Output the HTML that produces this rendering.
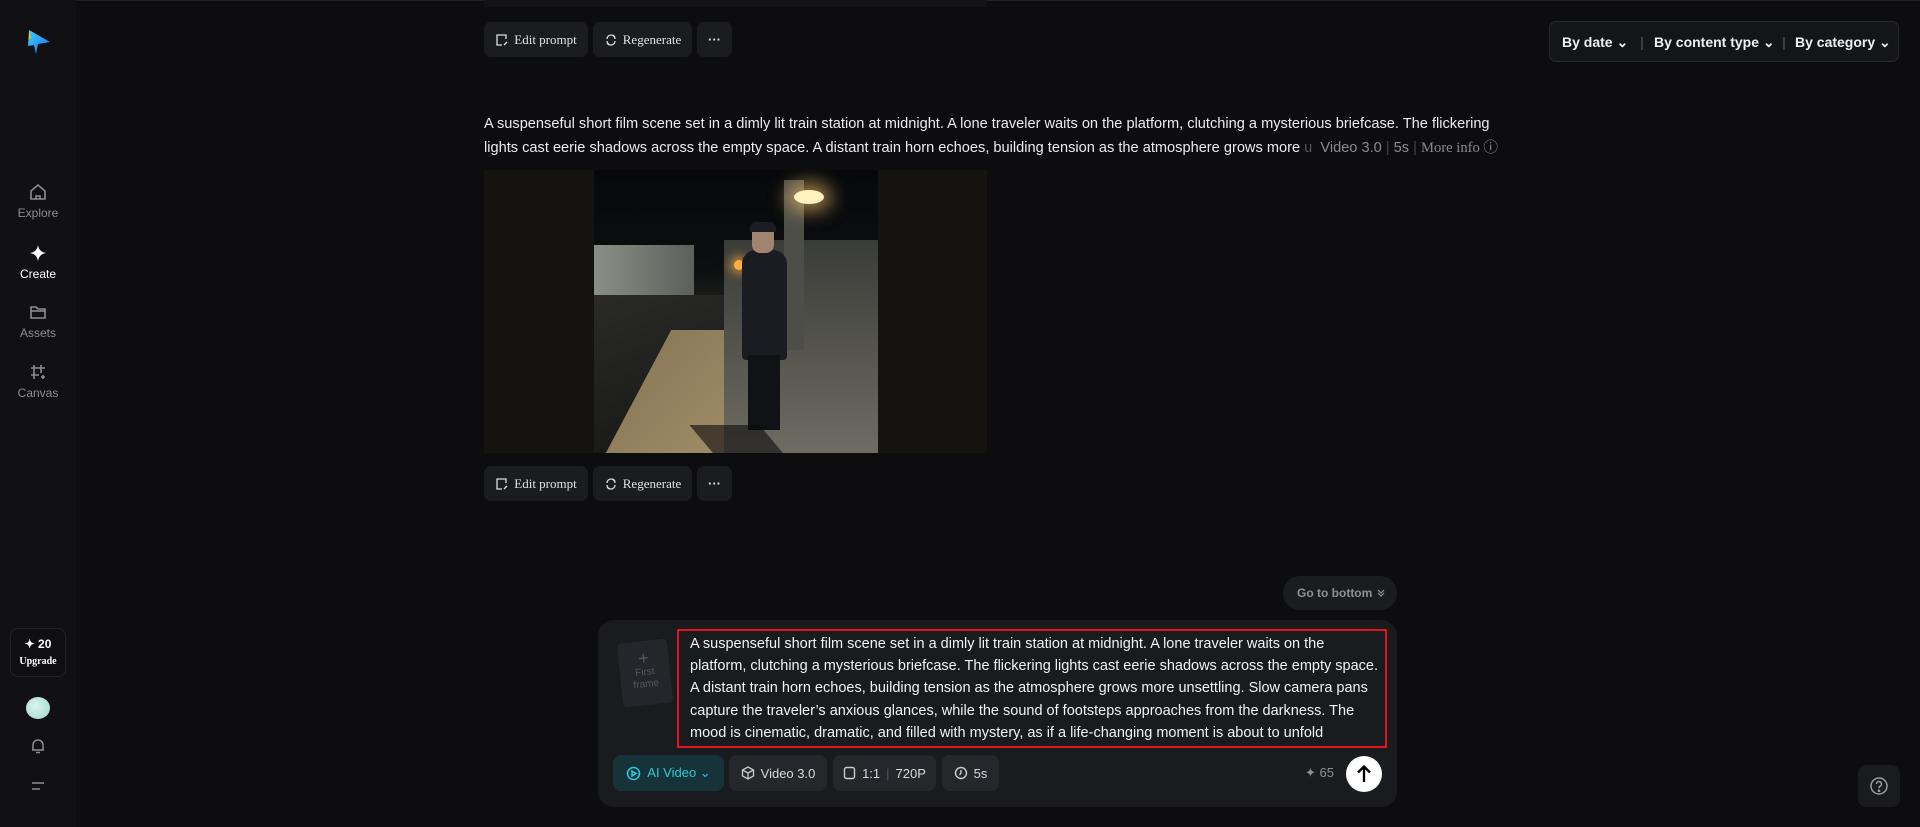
<!DOCTYPE html>
<html><head><meta charset="utf-8"><style>
*{box-sizing:border-box;margin:0;padding:0}
body{width:1920px;height:827px;background:#0d0d0f;font-family:"Liberation Sans",sans-serif;color:#e6e6e8;position:relative;overflow:hidden}
.abs{position:absolute}
.side{left:0;top:0;width:76px;height:827px;background:#111114}
.nav{left:0;width:76px;text-align:center;font-size:12px;color:#8b8d93}
.nav svg{display:block;margin:0 auto 4px}
.btn{position:absolute;height:35px;background:#1b1c20;border-radius:7px;font-family:"Liberation Serif",serif;font-size:13px;color:#e2e2e4;display:flex;align-items:center;justify-content:center;gap:5px}
.chip{position:absolute;top:755px;height:36px;background:#26272c;border-radius:8px;font-size:13px;color:#d8d9dc;display:flex;align-items:center;justify-content:center;gap:6px}
</style></head><body>
<div class="abs side"></div>
<div class="abs" style="left:76px;top:0;width:1844px;height:1px;background:#222"></div>
<svg class="abs" style="left:26px;top:28px" width="26" height="28" viewBox="0 0 26 28"><defs><linearGradient id="g" x1="0" y1="0" x2="1" y2="1"><stop offset="0" stop-color="#3bd0ff"/><stop offset="1" stop-color="#1a6cf0"/></linearGradient></defs><path d="M3 2 L24 14 L12 16 L10 26 L8 17 L2 18 Z" fill="url(#g)"/><path d="M3 2 L5 10 L3 12Z" fill="#f5c000"/></svg>
<div class="abs nav" style="top:182px"><svg width="20" height="20" viewBox="0 0 20 20" fill="none" stroke="#8b8d93" stroke-width="1.6"><path d="M3 9 L10 3 L17 9 V17 H3Z"/><path d="M8 17 v-3 h4 v3"/></svg>Explore</div>
<div class="abs nav" style="top:243px;color:#fff"><svg width="20" height="20" viewBox="0 0 20 20"><path d="M10 2 Q11 9 18 10 Q11 11 10 18 Q9 11 2 10 Q9 9 10 2Z" fill="#fff"/></svg>Create</div>
<div class="abs nav" style="top:302px"><svg width="20" height="20" viewBox="0 0 20 20" fill="none" stroke="#8b8d93" stroke-width="1.6"><path d="M3 5 h5 l2 2 h7 v9 H3Z"/><path d="M3 9 h14"/></svg>Assets</div>
<div class="abs nav" style="top:362px"><svg width="20" height="20" viewBox="0 0 20 20" fill="none" stroke="#8b8d93" stroke-width="1.6"><path d="M6 3 v14 M13 3 v8 M3 6 h14 M3 13 h8"/><path d="M15 13 v4 M13 15 h4"/></svg>Canvas</div>
<div class="abs" style="left:10px;top:628px;width:56px;height:49px;border:1px solid #222328;border-radius:8px;background:#0f0f12;text-align:center">
<div style="font-size:12px;color:#fff;margin-top:8px;font-weight:bold">✦ 20</div>
<div style="font-family:'Liberation Serif',serif;font-size:10px;color:#fff;margin-top:5px;font-weight:bold">Upgrade</div></div>
<div class="abs" style="left:26px;top:697px;width:24px;height:22px;border-radius:50%;background:radial-gradient(circle at 40% 40%,#d8f5ee,#9fd8cc)"></div>
<svg class="abs" style="left:29px;top:737px" width="18" height="18" viewBox="0 0 18 18" fill="none" stroke="#8b8d93" stroke-width="1.5"><path d="M4 13 V8 a5 5 0 0 1 10 0 V13 Z M3 13 h12 M7 15.5 h4"/></svg>
<svg class="abs" style="left:30px;top:779px" width="16" height="14" viewBox="0 0 16 14" stroke="#8b8d93" stroke-width="1.6"><path d="M2 4 h12 M2 10 h8"/></svg>

<div class="abs" style="left:484px;top:0;width:503px;height:7px;background:#141414"></div>
<div class="btn" style="left:484px;top:22px;width:104px"><svg width="14" height="14" viewBox="0 0 14 14" fill="none" stroke="#ddd" stroke-width="1.3"><path d="M11 6 V2 H2 V12 H7"/><path d="M9 12 L12 9"/></svg>Edit prompt</div>
<div class="btn" style="left:593px;top:22px;width:99px"><svg width="14" height="14" viewBox="0 0 14 14" fill="none" stroke="#ddd" stroke-width="1.3"><path d="M3 8 a4 4 0 0 0 8 0 M11 6 a4 4 0 0 0 -8 0 M9 2 l2 2 M5 12 l-2 -2"/></svg>Regenerate</div>
<div class="btn" style="left:697px;top:22px;width:35px;font-family:'Liberation Sans';font-weight:bold">···</div>

<div class="abs" style="left:1549px;top:21px;width:350px;height:41px;background:#141519;border:1px solid #25262b;border-radius:7px;font-size:14px;color:#f0f0f0;font-weight:bold">
<span class="abs" style="left:12px;top:12px">By date ⌄</span>
<span class="abs" style="left:90px;top:12px;color:#444">|</span>
<span class="abs" style="left:104px;top:12px">By content type ⌄</span>
<span class="abs" style="left:232px;top:12px;color:#444">|</span>
<span class="abs" style="left:245px;top:12px">By category ⌄</span></div>

<div class="abs" style="left:484px;top:112px;width:1020px;font-size:14.6px;line-height:24px;color:#ececee">
<div style="white-space:nowrap">A suspenseful short film scene set in a dimly lit train station at midnight. A lone traveler waits on the platform, clutching a mysterious briefcase. The flickering</div>
<div style="white-space:nowrap">lights cast eerie shadows across the empty space. A distant train horn echoes, building tension as the atmosphere grows more<span style="color:#555"> u</span><span style="color:#8a8b90"> &nbsp;Video 3.0 <span style="color:#444">|</span> 5s <span style="color:#444">|</span> <span style="font-family:'Liberation Serif',serif">More info ⓘ</span></span></div></div>

<div class="abs" style="left:484px;top:170px;width:503px;height:283px;background:#15130f"></div>
<div class="abs" style="left:594px;top:170px;width:284px;height:283px;overflow:hidden;background:linear-gradient(180deg,#06080a 0%,#0c0e10 35%,#2a2a24 55%,#5b574a 75%,#6f6a5a 100%)">
<div class="abs" style="left:0;top:75px;width:100px;height:50px;background:linear-gradient(90deg,#8a8f86,#5b605a)"></div>
<div class="abs" style="left:0;top:125px;width:130px;height:158px;background:linear-gradient(160deg,#2a2a28,#161614)"></div>
<div class="abs" style="left:40px;top:160px;width:120px;height:140px;background:linear-gradient(110deg,#8c7a58,#a08c68);transform:skewX(-28deg)"></div>
<div class="abs" style="left:130px;top:70px;width:154px;height:213px;background:linear-gradient(180deg,#3a3c38,#6e6c62)"></div>
<div class="abs" style="left:190px;top:10px;width:20px;height:170px;background:#4e4e48"></div>
<div class="abs" style="left:200px;top:20px;width:30px;height:14px;border-radius:50%;background:#fff2c0;box-shadow:0 0 18px 8px rgba(255,200,110,.6)"></div>
<div class="abs" style="left:140px;top:90px;width:10px;height:10px;border-radius:50%;background:#ffb040;box-shadow:0 0 10px 4px rgba(255,160,60,.7)"></div>
<div class="abs" style="left:148px;top:80px;width:45px;height:110px;background:#1a1c22;border-radius:14px 14px 4px 4px"></div>
<div class="abs" style="left:158px;top:55px;width:22px;height:28px;background:#a08470;border-radius:8px"></div>
<div class="abs" style="left:156px;top:52px;width:26px;height:10px;background:#1c1d22;border-radius:6px 6px 2px 2px"></div>
<div class="abs" style="left:154px;top:185px;width:32px;height:75px;background:#111216"></div>
<div class="abs" style="left:108px;top:255px;width:70px;height:30px;background:rgba(10,10,10,.6);transform:skewX(40deg)"></div>
</div>
<div class="btn" style="left:484px;top:466px;width:104px"><svg width="14" height="14" viewBox="0 0 14 14" fill="none" stroke="#ddd" stroke-width="1.3"><path d="M11 6 V2 H2 V12 H7"/><path d="M9 12 L12 9"/></svg>Edit prompt</div>
<div class="btn" style="left:593px;top:466px;width:99px"><svg width="14" height="14" viewBox="0 0 14 14" fill="none" stroke="#ddd" stroke-width="1.3"><path d="M3 8 a4 4 0 0 0 8 0 M11 6 a4 4 0 0 0 -8 0 M9 2 l2 2 M5 12 l-2 -2"/></svg>Regenerate</div>
<div class="btn" style="left:697px;top:466px;width:35px;font-family:'Liberation Sans';font-weight:bold">···</div>

<div class="abs" style="left:1283px;top:576px;width:114px;height:34px;border-radius:17px;background:#1b1c20;font-size:12px;font-weight:bold;color:#8e9096;line-height:34px;padding-left:14px">Go to bottom <svg width="10" height="10" viewBox="0 0 10 10" fill="none" stroke="#8e9096" stroke-width="1.2" style="vertical-align:-1px"><path d="M2 2 L5 5 L8 2 M2 5 L5 8 L8 5"/></svg></div>

<div class="abs" style="left:598px;top:620px;width:799px;height:187px;border-radius:16px;background:#1a1b1f"></div>
<div class="abs" style="left:620px;top:641px;width:50px;height:64px;border-radius:4px;background:#25262b;transform:rotate(-6deg);text-align:center;color:#55575d;font-size:10px;line-height:12px;padding-top:8px"><div style="font-size:18px;line-height:18px">+</div>First<br>frame</div>
<div class="abs" style="left:677px;top:629px;width:710px;height:119px;border:2px solid #e0141e"></div>
<div class="abs" style="left:690px;top:633px;width:700px;font-size:14.5px;line-height:22.2px;color:#f2f2f4">
<div style="white-space:nowrap">A suspenseful short film scene set in a dimly lit train station at midnight. A lone traveler waits on the</div>
<div style="white-space:nowrap">platform, clutching a mysterious briefcase. The flickering lights cast eerie shadows across the empty space.</div>
<div style="white-space:nowrap">A distant train horn echoes, building tension as the atmosphere grows more unsettling. Slow camera pans</div>
<div style="white-space:nowrap">capture the traveler’s anxious glances, while the sound of footsteps approaches from the darkness. The</div>
<div style="white-space:nowrap">mood is cinematic, dramatic, and filled with mystery, as if a life-changing moment is about to unfold</div></div>
<div class="chip" style="left:613px;width:111px;background:#17333a;color:#2ec8d8"><svg width="15" height="15" viewBox="0 0 15 15" fill="none" stroke="#2ec8d8" stroke-width="1.5"><circle cx="7.5" cy="7.5" r="6"/><path d="M6 5 L10 7.5 L6 10Z"/></svg>AI Video ⌄</div>
<div class="chip" style="left:729px;width:98px"><svg width="14" height="14" viewBox="0 0 14 14" fill="none" stroke="#ccc" stroke-width="1.3"><path d="M7 1 L12.5 4 V10 L7 13 L1.5 10 V4Z M1.5 4 L7 7 L12.5 4 M7 7 V13"/></svg>Video 3.0</div>
<div class="chip" style="left:833px;width:103px"><svg width="13" height="14" viewBox="0 0 13 14" fill="none" stroke="#ccc" stroke-width="1.4"><rect x="1.5" y="1.5" width="10" height="11" rx="2"/></svg>1:1 <span style="color:#555">|</span> 720P</div>
<div class="chip" style="left:942px;width:57px"><svg width="14" height="14" viewBox="0 0 14 14" fill="none" stroke="#ccc" stroke-width="1.4"><circle cx="7" cy="7" r="5.5"/><path d="M7 4 V7 L5.5 9"/></svg>5s</div>
<div class="abs" style="left:1305px;top:765px;font-size:13px;color:#8e9096">✦ 65</div>
<div class="abs" style="left:1346px;top:756px;width:36px;height:36px;border-radius:50%;background:#fff"><svg width="36" height="36" viewBox="0 0 36 36" fill="none" stroke="#000" stroke-width="2.3"><path d="M18 26 V11 M12 16.5 L18 10.5 L24 16.5"/></svg></div>
<div class="abs" style="left:1858px;top:765px;width:42px;height:42px;border-radius:8px;background:#1a1b1f"><svg width="42" height="42" viewBox="0 0 42 42" fill="none" stroke="#9a9ca2" stroke-width="1.5"><circle cx="21" cy="21" r="8"/><path d="M18.5 19 a2.5 2.5 0 1 1 3.5 2.3 c-1 .5 -1 1 -1 2"/><circle cx="21" cy="25.8" r=".6" fill="#9a9ca2"/></svg></div>
</body></html>
